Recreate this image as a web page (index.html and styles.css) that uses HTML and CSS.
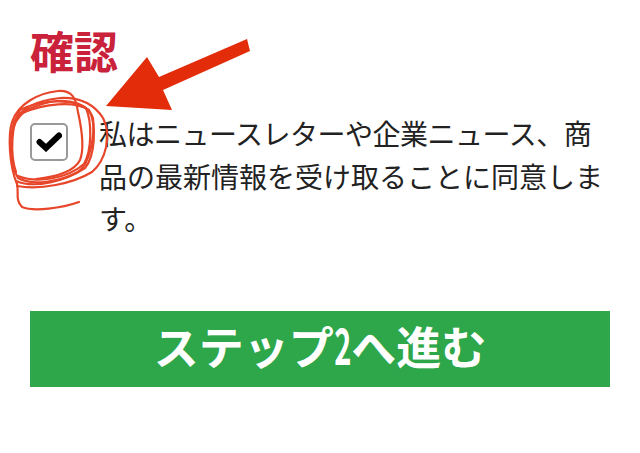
FILE: index.html
```html
<!DOCTYPE html>
<html>
<head>
  <meta charset="utf-8"/>
  <title>確認</title>
  <link rel="stylesheet" href="styles.css">
</head>
<body>
  <div class="page">
    <h1>確認</h1>

    <div class="consent">
      <div class="checkbox">
        <svg viewBox="0 0 26 20" width="26" height="20">
          <path d="M3.5 10 L10 16 L23 3.5" fill="none" stroke="#000" stroke-width="6" stroke-linecap="round" stroke-linejoin="miter"/>
        </svg>
      </div>
      <p>私はニュースレターや企業ニュース、商品の最新情報を受け取ることに同意します。</p>
    </div>

    <button type="button" class="btn-next">ステップ<span class="digit">2</span>へ進む</button>
  </div>

  <!-- red marks drawn over the screenshot -->
  <svg class="marks" viewBox="0 0 640 453" width="640" height="453">
    <polygon fill="#e32c09" points="106,106 147,57 159,77 247,39 250,51 163,90 172,110"/>
    <g fill="none" stroke="#e8462a" stroke-width="2.2" stroke-linecap="round">
      <path d="M79 202 C62 208 34 212 22 207 C15 200 19 192 17 184 C9 165 8 135 12 122 C18 104 38 93 58 91 C72 90 76 98 78 112 C82 130 84 150 80 160 C74 172 55 177 36 179"/>
      <path d="M17 186 C40 190 72 184 92 172 C106 160 112 135 103 118 C94 104 80 97 60 98 C40 100 22 106 14 122 C9 140 10 165 18 178 C32 186 60 182 78 172 C90 164 95 135 93 118 C88 104 70 98 50 102 C34 106 20 110 14 126"/>
      <path d="M16 181 C35 189 65 181 85 168 C95 156 97 125 89 110 C74 100 44 104 22 113"/>
      <path d="M18 176 C38 184 68 178 84 164 C92 150 92 122 86 108 C70 98 40 100 20 110 C11 125 10 155 16 172"/>
    </g>
  </svg>
</body>
</html>
```

FILE: styles.css
```css
* {
  box-sizing: border-box;
  margin: 0;
  padding: 0;
}
body {
  font-family: "Noto Sans CJK JP", "Noto Sans", sans-serif;
  background: #fff;
  color: #222;
  width: 640px;
  height: 453px;
  overflow: hidden;
  position: relative;
}

.page {
  padding: 22px 30px 0;
}
h1 {
  color: #c9223a;
  font-size: 44px;
  font-weight: 700;
  line-height: 56px;
  margin-bottom: 39px;
}

/* ---------- CHECKBOX + TEXT ---------- */
.consent {
  display: flex;
  align-items: flex-start;
  gap: 31px;
}
.checkbox {
  flex: none;
  width: 38px;
  height: 38px;
  margin-top: 6px;
  border: 2px solid #999;
  border-radius: 5px;
  background: #fff;
  display: flex;
  align-items: center;
  justify-content: center;
}
.consent p {
  flex: 1;
  font-size: 28px;
  line-height: 42.5px;
  margin-top: -5px;
}
.consent p::first-line {
  letter-spacing: -0.5px;
}

/* ---------- BUTTON ---------- */
.btn-next {
  display: block;
  width: 580px;
  height: 76px;
  margin-top: 71px;
  padding-bottom: 6px;
  background: #2ea64a;
  color: #fff;
  border: none;
  font-family: inherit;
  font-size: 45px;
  font-weight: 700;
  line-height: 60px;
}
.btn-next .digit {
  display: inline-block;
  font-size: 50px;
  line-height: 50px;
  transform: scaleX(0.58);
  margin: 0 -6px;
}

.marks {
  position: absolute;
  left: 0;
  top: 0;
}
```
